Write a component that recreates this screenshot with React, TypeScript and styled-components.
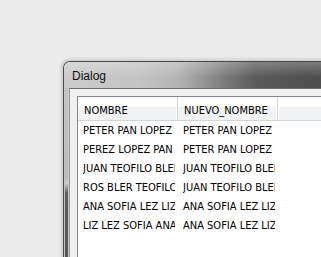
import React from 'react'
import styled, { createGlobalStyle } from 'styled-components'

const rows: [string, string][] = [
  ['PETER PAN LOPEZ', 'PETER PAN LOPEZ'],
  ['PEREZ LOPEZ PAN', 'PETER PAN LOPEZ'],
  ['JUAN TEOFILO BLER', 'JUAN TEOFILO BLER'],
  ['ROS BLER TEOFILO', 'JUAN TEOFILO BLER'],
  ['ANA SOFIA LEZ LIZ', 'ANA SOFIA LEZ LIZ'],
  ['LIZ LEZ SOFIA ANA', 'ANA SOFIA LEZ LIZ'],
]

const GlobalStyle = createGlobalStyle`
  html, body {
    margin: 0;
    padding: 0;
    background: #ececec;
    overflow: hidden;
  }
`

export default function App() {
  return (
    <>
      <GlobalStyle />
      <Page>
        <Window>
          <TitleBar>
            <Title>Dialog</Title>
          </TitleBar>
          <Body>
            <SideFrame />
            <Client>
              <Table>
                <HeaderRow>
                  <HeaderCell>NOMBRE</HeaderCell>
                  <HeaderCell>NUEVO_NOMBRE</HeaderCell>
                  <HeaderFiller />
                </HeaderRow>
                {rows.map(([a, b], i) => (
                  <Row key={i}>
                    <Cell>{a}</Cell>
                    <Cell>{b}</Cell>
                  </Row>
                ))}
              </Table>
            </Client>
          </Body>
        </Window>
      </Page>
    </>
  )
}

const Page = styled.div`
  width: 321px;
  height: 257px;
  padding: 61px 0 0 63px;
  box-sizing: border-box;
  overflow: hidden;
`

const Window = styled.div`
  width: 300px;
  height: 230px;
  display: flex;
  flex-direction: column;
  border: 1px solid #4a4a4a;
  border-right: none;
  border-bottom: none;
  border-top-left-radius: 7px;
  overflow: hidden;
  box-shadow: -1px -1px 4px rgba(0, 0, 0, 0.2);
`

const TitleBar = styled.div`
  height: 26px;
  flex: none;
  display: flex;
  align-items: center;
  padding-left: 8px;
  background:
    linear-gradient(to bottom, rgba(255, 255, 255, 0.25), rgba(255, 255, 255, 0) 60%),
    linear-gradient(
      to right,
      #cbcbcb 0%,
      #c4c4c4 25%,
      #b4b4b4 38%,
      #7a7a7a 54%,
      #5a5a5a 64%,
      #505050 80%,
      #4c4c4c 100%
    );
`

const Title = styled.span`
  font-family: 'Liberation Sans', Arial, sans-serif;
  font-size: 12px;
  color: #111;
  margin-top: 1px;
`

const Body = styled.div`
  flex: 1;
  display: flex;
`

const SideFrame = styled.div`
  width: 5px;
  flex: none;
  background:
    linear-gradient(
      to right,
      #c4c4c4 0,
      #c4c4c4 1px,
      transparent 1px,
      transparent 4px,
      #c8c8c8 4px
    ),
    linear-gradient(to bottom, #c6c6c6 0px, #bcbcbc 90px, #d0d0d0 95px, #5c5c5c 105px, #555 100%);
`

const Client = styled.div`
  flex: 1;
  background: #f0f0f0;
  border-top: 1px solid #707070;
  border-left: 1px solid #9a9a9a;
  padding: 7px 0 0 7px;
`

const Table = styled.div`
  height: 100%;
  background: #fff;
  border: 1px solid #828790;
  border-right: none;
  border-bottom: none;
  font-family: 'DejaVu Sans Condensed', 'DejaVu Sans', sans-serif;
  font-size: 11px;
  color: #000;
`

const HeaderRow = styled.div`
  display: flex;
  height: 23px;
  background: linear-gradient(to bottom, #ffffff 0%, #ffffff 40%, #f1f2f4 45%, #f1f2f4 100%);
  border-bottom: 1px solid #d5d5d5;
`

const HeaderCell = styled.div`
  width: 100px;
  flex: none;
  display: flex;
  align-items: center;
  padding: 3px 0 0 6px;
  box-sizing: border-box;
  border-right: 1px solid #d5d5d5;
  box-shadow: inset -1px 0 0 #fff;
  white-space: nowrap;
`

const HeaderFiller = styled.div`
  flex: 1;
  border-left: 1px solid #fff;
`

const Row = styled.div`
  display: flex;
  height: 19px;
  align-items: center;
`

const Cell = styled.div`
  width: 92px;
  flex: none;
  margin: 0 3px 0 5px;
  white-space: nowrap;
  overflow: hidden;
`
